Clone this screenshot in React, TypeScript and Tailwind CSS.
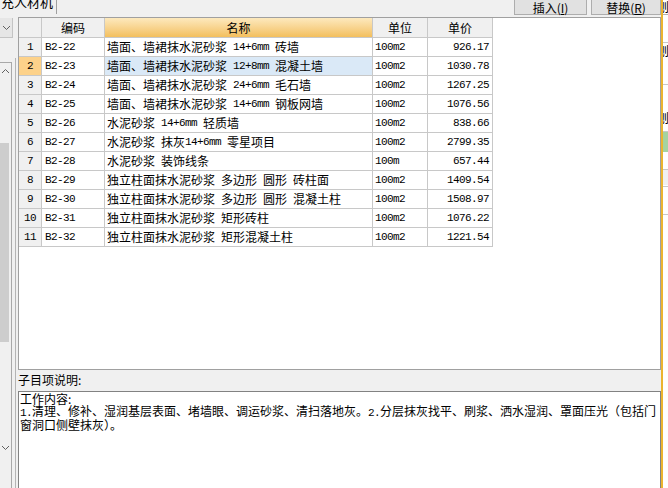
import { Fragment } from "react";

type Row = { code: string; name: string; unit: string; price: string };

const ROWS: Row[] = [
  { code: "B2-22", name: "墙面、墙裙抹水泥砂浆 14+6mm 砖墙", unit: "100m2", price: "926.17" },
  { code: "B2-23", name: "墙面、墙裙抹水泥砂浆 12+8mm 混凝土墙", unit: "100m2", price: "1030.78" },
  { code: "B2-24", name: "墙面、墙裙抹水泥砂浆 24+6mm 毛石墙", unit: "100m2", price: "1267.25" },
  { code: "B2-25", name: "墙面、墙裙抹水泥砂浆 14+6mm 钢板网墙", unit: "100m2", price: "1076.56" },
  { code: "B2-26", name: "水泥砂浆 14+6mm 轻质墙", unit: "100m2", price: "838.66" },
  { code: "B2-27", name: "水泥砂浆 抹灰14+6mm 零星项目", unit: "100m2", price: "2799.35" },
  { code: "B2-28", name: "水泥砂浆 装饰线条", unit: "100m", price: "657.44" },
  { code: "B2-29", name: "独立柱面抹水泥砂浆 多边形 圆形 砖柱面", unit: "100m2", price: "1409.54" },
  { code: "B2-30", name: "独立柱面抹水泥砂浆 多边形 圆形 混凝土柱", unit: "100m2", price: "1508.97" },
  { code: "B2-31", name: "独立柱面抹水泥砂浆 矩形砖柱", unit: "100m2", price: "1076.22" },
  { code: "B2-32", name: "独立柱面抹水泥砂浆 矩形混凝土柱", unit: "100m2", price: "1221.54" },
];

const SELECTED = 1;

// ascii runs get a narrow mono face so they sit like the half-width glyphs of the original
function Txt({ s }: { s: string }) {
  const parts = s.split(/([\x20-\x7e]+)/).filter(Boolean);
  return (
    <>
      {parts.map((p, i) =>
        /^[\x20-\x7e]+$/.test(p) ? (
          <span
            key={i}
            className="font-['Liberation_Mono'] text-[11px] tracking-[-0.6px] whitespace-pre"
          >
            {p}
          </span>
        ) : (
          <Fragment key={i}>{p}</Fragment>
        ),
      )}
    </>
  );
}

function Chevron({ up }: { up?: boolean }) {
  return (
    <svg width="9" height="6" viewBox="0 0 9 6" className="text-[#606060]">
      <path
        d={up ? "M1 5 L4.5 1.5 L8 5" : "M1 1 L4.5 4.5 L8 1"}
        fill="none"
        stroke="currentColor"
        strokeWidth="1"
      />
    </svg>
  );
}

function HeaderCell({ label, accent }: { label: string; accent?: boolean }) {
  return (
    <div
      className={`h-[20px] flex items-center justify-center border-r border-b border-[#c8c8c8] ${
        accent
          ? "bg-gradient-to-b from-[#fde9bd] to-[#f3bf5c]"
          : "bg-[#f0f0f0]"
      }`}
    >
      {label}
    </div>
  );
}

export default function App() {
  return (
    <div className="w-[668px] h-[488px] overflow-hidden bg-[#f0f0f0] flex text-[12px] text-black font-['Noto_Sans_CJK_SC',sans-serif]">
      <div className="w-[661px] flex flex-col">
        {/* top strip: clipped tab + buttons */}
        <div className="h-[17px] flex items-start shrink-0">
          <div className="w-[57px] h-[14px] overflow-hidden border-r border-[#a0a0a0]">
            <div className="-mt-[7px] leading-[18px] text-[13px] pl-[1px]">充人材机</div>
          </div>
          <div className="flex-1" />
          <div className="flex gap-[4px] -mt-[5px]">
            <button className="w-[73px] h-[20px] bg-[#e1e1e1] border border-[#adadad] text-[12px] leading-[18px] pt-[3px]">
              插入(<span className="underline">I</span>)
            </button>
            <button className="w-[70px] h-[20px] bg-[#e1e1e1] border border-[#adadad] text-[12px] leading-[18px] pt-[3px]">
              替换(<span className="underline">R</span>)
            </button>
          </div>
        </div>

        <div className="flex flex-1 min-h-0">
          {/* left narrow tree pane */}
          <div className="w-[18px] flex flex-col shrink-0">
            <div className="mt-[1px] w-[13px] h-[20px] bg-[#e6e6e6] border-r border-b border-[#c4c4c4] flex items-center justify-center">
              <Chevron />
            </div>
            <div className="mt-[24px] flex-1 flex">
              <div className="w-[12px] border-t border-r border-[#a8a8a8] flex flex-col bg-[#f0f0f0]">
                <div className="h-[16px] flex items-center pl-[1px]">
                  <Chevron up />
                </div>
                <div className="mt-[64px] w-[9px] h-[199px] bg-[#cdcdcd]" />
                <div className="mt-[103px] pl-[1px]">
                  <Chevron />
                </div>
              </div>
              <div className="ml-[3px] w-px bg-[#b4b4b4] -mt-[4px]" />
            </div>
          </div>

          <div className="flex-1 flex flex-col min-w-0">
            {/* main grid */}
            <div className="h-[353px] bg-white border border-[#a0a0a0] shrink-0">
              <div className="grid grid-cols-[23px_63px_268px_55px_65px] w-max">
                <HeaderCell label="" />
                <HeaderCell label="编码" />
                <HeaderCell label="名称" accent />
                <HeaderCell label="单位" />
                <HeaderCell label="单价" />
                {ROWS.map((r, i) => (
                  <Fragment key={r.code}>
                    <div
                      className={`h-[19px] flex items-center justify-center border-r border-b border-[#c8c8c8] ${
                        i === SELECTED ? "bg-[#fdd28a]" : "bg-[#f0f0f0]"
                      }`}
                    >
                      <Txt s={String(i + 1)} />
                    </div>
                    <div className="h-[19px] flex items-center pl-[3px] border-r border-b border-[#c8c8c8]">
                      <Txt s={r.code} />
                    </div>
                    <div
                      className={`h-[19px] flex items-center pl-[2px] whitespace-nowrap overflow-hidden border-r border-b border-[#c8c8c8] ${
                        i === SELECTED ? "bg-[#dae9f7]" : ""
                      }`}
                    >
                      <Txt s={r.name} />
                    </div>
                    <div className="h-[19px] flex items-center pl-[2px] border-r border-b border-[#c8c8c8]">
                      <Txt s={r.unit} />
                    </div>
                    <div className="h-[19px] flex items-center justify-end pr-[3px] border-r border-b border-[#c8c8c8]">
                      <Txt s={r.price} />
                    </div>
                  </Fragment>
                ))}
              </div>
            </div>

            <div className="h-[22px] flex items-center leading-none shrink-0 -mt-[1px]">
              子目项说明:
            </div>

            <div className="flex-1 bg-white border border-[#828282] border-b-0 pl-[1px] pt-[1px] leading-[12px]">
              <div>工作内容:</div>
              <div className="whitespace-nowrap">
                <Txt s="1." />
                清理、修补、湿润基层表面、堵墙眼、调运砂浆、清扫落地灰。
                <Txt s="2." />
                分层抹灰找平、刷浆、洒水湿润、罩面压光（包括门
              </div>
              <div>窗洞口侧壁抹灰）。</div>
            </div>
          </div>
        </div>
      </div>

      {/* neighbour pane peeking in at the right */}
      <div className="w-[2px] bg-[#ebb42f] shrink-0" />
      <div className="flex-1 bg-white flex flex-col text-[12px] leading-none overflow-hidden">
        <div className="h-[15px] border-b border-[#b0b0b0] -ml-[6px] pt-[1px]">刨</div>
        <div className="h-[28px] border-b border-[#c8c8c8]" />
        <div className="h-[14px] -ml-[6px] pt-[2px]">刨</div>
        <div className="h-[28px] border-b border-[#c8c8c8]" />
        <div className="h-[47px] -ml-[6px] pt-[27px] border-b border-[#c8c8c8]">刨</div>
        <div className="h-[20px] bg-[#a5d3a0]" />
        <div className="h-[18px] border-b border-[#c8c8c8]" />
        <div className="h-[15px] bg-[#f0f0f0]" />
        <div className="h-[2px] border-b border-[#c8c8c8]" />
        <div className="h-[28px] border-b border-[#c8c8c8]" />
        <div className="flex-1" />
      </div>
    </div>
  );
}
